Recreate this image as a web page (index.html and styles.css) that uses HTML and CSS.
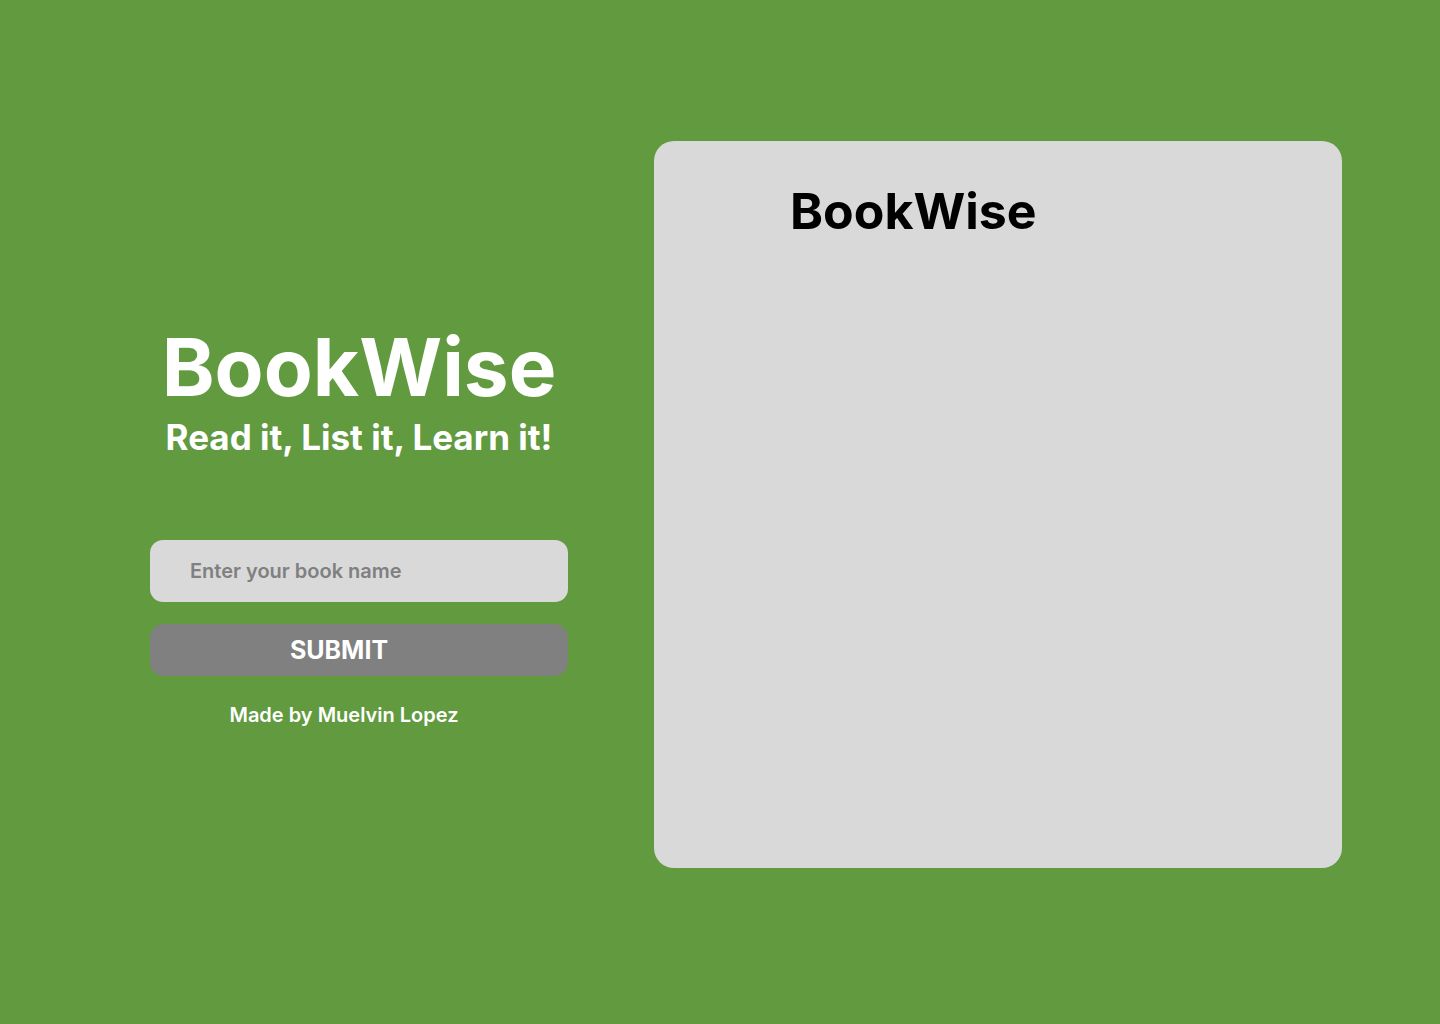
FILE: index.html
```html
<!DOCTYPE html>
<html lang="en">
<head>
<meta charset="utf-8">
<title>BookWise</title>
<link rel="stylesheet" href="styles.css">
</head>
<body>
<main class="page">
  <section class="intro">
    <h1 class="brand">BookWise</h1>
    <p class="tagline">Read it, List it, Learn it!</p>
    <form class="search" onsubmit="return false">
      <input class="search-input" type="text" placeholder="Enter your book name">
      <button class="search-btn" type="submit">SUBMIT</button>
    </form>
    <p class="credit">Made by Muelvin Lopez</p>
  </section>
  <section class="panel">
    <h2 class="panel-title">BookWise</h2>
  </section>
</main>
</body>
</html>
```
FILE: styles.css
```css
* { box-sizing: border-box; }
html, body { margin: 0; padding: 0; }
body {
  background: #619a3f;
  font-family: Inter, "Noto Sans", sans-serif;
  width: 1440px;
  height: 1024px;
  overflow: hidden;
}
.page {
  display: flex;
  align-items: flex-start;
  padding: 141px 0 0 150px;
  gap: 86px;
}
.intro {
  width: 418px;
  display: flex;
  flex-direction: column;
  align-items: center;
  padding-top: 186px;
}
.brand {
  margin: 0;
  font-size: 80px;
  font-weight: 700;
  line-height: 1;
  color: #fff;
}
.tagline {
  margin: 9px 0 0;
  font-size: 35px;
  font-weight: 700;
  line-height: 1.2;
  color: #fff;
}
.search {
  width: 100%;
  display: flex;
  flex-direction: column;
  gap: 22px;
  margin-top: 82px;
}
.search-input {
  width: 100%;
  height: 62px;
  border: none;
  border-radius: 13px;
  background: #d9d9d9;
  padding: 0 40px;
  font-family: inherit;
  font-size: 20px;
  font-weight: 600;
  color: #333;
  outline: none;
}
.search-input::placeholder { color: #808080; }
.search-btn {
  width: 100%;
  height: 52px;
  border: none;
  border-radius: 14px;
  background: #808080;
  color: #fff;
  font-family: inherit;
  font-size: 25px;
  font-weight: 700;
  padding: 0 40px 0 0;
  cursor: pointer;
}
.credit {
  margin: 27px 0 0;
  padding-right: 30px;
  font-size: 20px;
  font-weight: 600;
  color: #fff;
}
.panel {
  width: 688px;
  height: 727px;
  background: #d9d9d9;
  border-radius: 20px;
  padding: 40px 0 0 136px;
}
.panel-title {
  margin: 0;
  font-size: 50px;
  font-weight: 700;
  line-height: 1.2;
  color: #000;
}
```
